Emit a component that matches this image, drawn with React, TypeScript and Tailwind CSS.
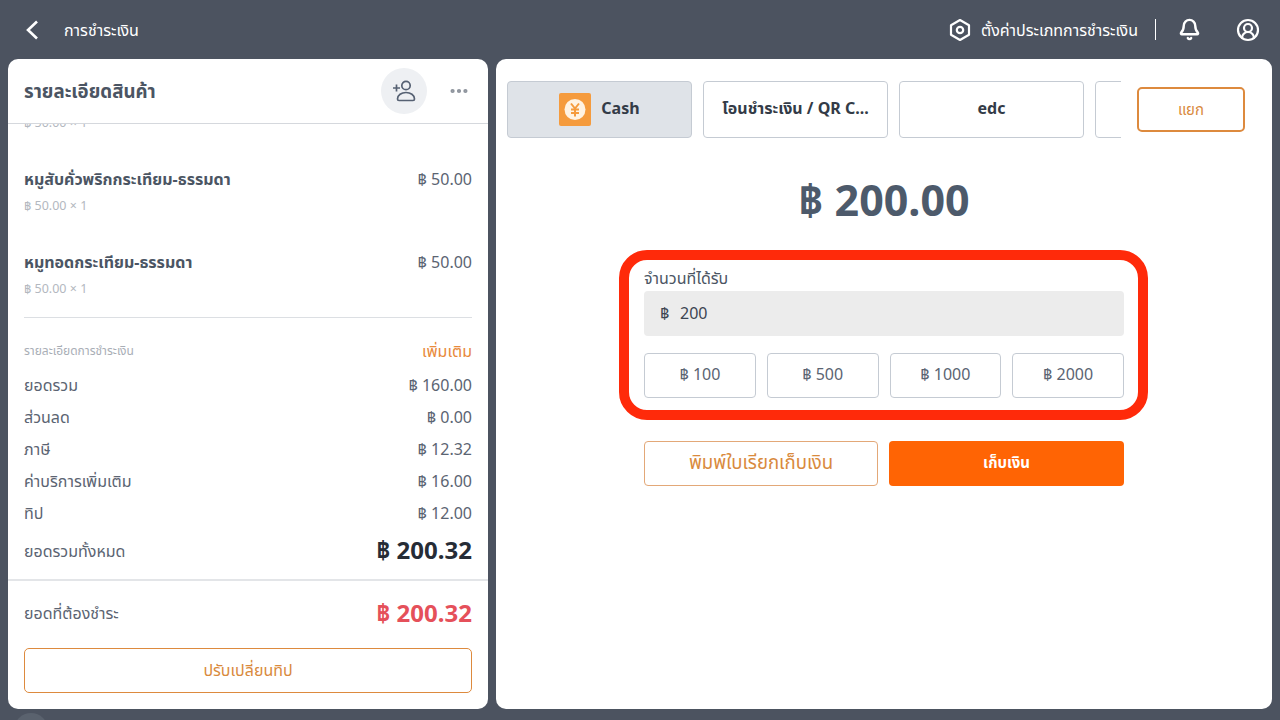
import React from "react";
import { Bell, CircleUserRound, Ellipsis } from "lucide-react";

const font = { fontFamily: '"Noto Sans", "Noto Sans Thai", "Open Sans", "DejaVu Sans", sans-serif' };

function Item({ name, price }: { name: string; price: string }) {
  return (
    <div className="h-[83px] shrink-0 px-4">
      <div className="flex h-[26px] items-center justify-between">
        <span className="text-[16px] font-bold text-[#4b5563]">{name}</span>
        <span className="text-[16px] text-[#5b6472]">{price}</span>
      </div>
      <div className="mt-[5px] h-[18px] text-[12.5px] leading-[18px] text-[#b3b8c0]">฿ 50.00 × 1</div>
    </div>
  );
}

function Row({ label, value }: { label: string; value: string }) {
  return (
    <div className="flex h-[32px] items-center justify-between text-[16px] text-[#5b6472]">
      <span>{label}</span>
      <span>{value}</span>
    </div>
  );
}

function Tab({ label, active, icon }: { label: string; active?: boolean; icon?: boolean }) {
  return (
    <div
      className={`flex h-[57px] w-[185px] shrink-0 items-center justify-center gap-[10px] rounded-[4px] border border-[#c5cbd3] pb-[3px] text-[16px] font-bold text-[#333b47] ${
        active ? "bg-[#dfe3e8]" : "bg-white"
      }`}
    >
      {icon && (
        <svg width="32" height="33" viewBox="0 0 32 33" className="mt-[3px]">
          <rect width="32" height="33" rx="2" fill="#f59b3d" />
          <circle cx="16" cy="16.5" r="10.5" fill="#fff3e3" />
          <path d="M12 10.5l4 5 4-5M16 15.5v8M12 16.5h8M12 20h8" stroke="#f59b3d" strokeWidth="2" fill="none" />
        </svg>
      )}
      <span>{label}</span>
    </div>
  );
}

function Quick({ label }: { label: string }) {
  return (
    <div className="flex h-[45px] items-center justify-center rounded-[4px] border border-[#c5cbd3] pb-[3px] text-[16px] text-[#5b6472]">
      {label}
    </div>
  );
}

export default function App() {
  return (
    <div className="relative flex h-[720px] w-[1280px] flex-col overflow-hidden bg-[#4c5360]" style={font}>
      <header className="flex h-[59px] shrink-0 items-center justify-between pl-[25px] pr-[20px] text-white">
        <div className="flex items-center">
          <svg width="14" height="20" viewBox="0 0 14 20" fill="none" stroke="white" strokeWidth="2.6">
            <path d="M12 1.5L3 10l9 8.5" />
          </svg>
          <span className="ml-[25px] text-[16px]">การชำระเงิน</span>
        </div>
        <div className="flex items-center">
          <svg width="24" height="24" viewBox="0 0 24 24" fill="none" stroke="white" strokeWidth="2.2">
            <path d="M12 2l9 5.2v9.6L12 22l-9-5.2V7.2z" strokeLinejoin="round" />
            <circle cx="12" cy="12" r="3.2" />
          </svg>
          <span className="ml-[9px] text-[16px]">ตั้งค่าประเภทการชำระเงิน</span>
          <span className="ml-[17px] h-[21px] w-px bg-white" />
          <Bell size={23} strokeWidth={2.5} className="ml-[22px]" />
          <CircleUserRound size={24} strokeWidth={2.2} className="ml-[35px]" />
        </div>
      </header>

      <main className="flex gap-[8px] px-[8px]">
        <section className="flex h-[650px] w-[480px] flex-col overflow-hidden rounded-[10px] bg-white">
          <div className="flex h-[65px] shrink-0 items-center justify-between border-b border-[#d5d8dd] pl-4 pr-[18px]">
            <span className="text-[18.7px] font-bold text-[#4b5563]">รายละเอียดสินค้า</span>
            <div className="flex items-center gap-[21px]">
              <div className="flex h-[46px] w-[46px] items-center justify-center rounded-full bg-[#eef0f3]">
                <svg width="24" height="24" viewBox="0 0 24 24" fill="none" stroke="#566173" strokeWidth="1.7">
                  <circle cx="14" cy="6.5" r="4.2" />
                  <path d="M7 21.5q-1.5 0-1.5-1.5C5.5 16 9.5 13.5 14 13.5S22.5 16 22.5 20q0 1.5-1.5 1.5z" />
                  <path d="M1 9h7M4.5 5.5v7" />
                </svg>
              </div>
              <Ellipsis size={22} strokeWidth={2.6} className="text-[#8d939c]" />
            </div>
          </div>
          <div className="flex h-[193px] shrink-0 flex-col overflow-hidden">
            <div className="-mt-[10px] shrink-0 px-4 pb-[34px] text-[12.5px] leading-[18px] text-[#b3b8c0]">
              ฿ 50.00 × 1
            </div>
            <Item name="หมูสับคั่วพริกกระเทียม-ธรรมดา" price="฿ 50.00" />
            <Item name="หมูทอดกระเทียม-ธรรมดา" price="฿ 50.00" />
          </div>
          <div className="mx-4 border-t border-[#dcdfe3] pt-[20px]">
            <div className="flex h-[26px] items-center justify-between">
              <span className="text-[12px] text-[#a9aeb6]">รายละเอียดการชำระเงิน</span>
              <span className="text-[16px] text-[#e8893a]">เพิ่มเติม</span>
            </div>
            <div className="mt-[5px]">
              <Row label="ยอดรวม" value="฿ 160.00" />
              <Row label="ส่วนลด" value="฿ 0.00" />
              <Row label="ภาษี" value="฿ 12.32" />
              <Row label="ค่าบริการเพิ่มเติม" value="฿ 16.00" />
              <Row label="ทิป" value="฿ 12.00" />
            </div>
            <div className="flex h-[42px] items-center justify-between text-[#5b6472]">
              <span className="pt-[2px] text-[16px]">ยอดรวมทั้งหมด</span>
              <span className="text-[24px] font-bold text-[#262c36]">฿ 200.32</span>
            </div>
          </div>
          <div className="mt-[8px] flex h-[64px] shrink-0 items-center justify-between border-t-2 border-[#e3e5e8] px-4 pt-[2px]">
            <span className="text-[16px] text-[#5b6472]">ยอดที่ต้องชำระ</span>
            <span className="text-[24px] font-bold text-[#e5505a]">฿ 200.32</span>
          </div>
          <div className="mx-4 mt-[5px] flex h-[45px] shrink-0 items-center justify-center rounded-[5px] border border-[#dd8a3e] pb-[2px] text-[16px] text-[#d98a3d]">
            ปรับเปลี่ยนทิป
          </div>
        </section>

        <section className="flex h-[650px] w-[776px] flex-col items-center overflow-hidden rounded-[10px] bg-white">
          <div className="flex w-full shrink-0 items-start pl-[11px] pr-[27px] pt-[22px]">
            <div className="flex w-[614px] gap-[11px] overflow-hidden">
              <Tab label="Cash" active icon />
              <Tab label="โอนชำระเงิน / QR C..." />
              <Tab label="edc" />
              <Tab label="" />
            </div>
            <div className="ml-[16px] mt-[6px] flex h-[45px] w-[108px] shrink-0 items-center justify-center rounded-[5px] border-2 border-[#dd8a3e] text-[15px] text-[#d98a3d]">
              แยก
            </div>
          </div>

          <div className="mt-[34px] h-[56px] text-[43px] font-bold leading-[56px] text-[#4d5a6b]">฿ 200.00</div>

          <div className="mr-[1px] mt-[22px] h-[170px] w-[529px] shrink-0 rounded-[28px] border-[10px] border-[#ff2a0a] pl-[15px] pr-[14px] pt-[9px]">
            <div className="h-[22px] text-[16px] leading-[18px] text-[#4b5563]">จำนวนที่ได้รับ</div>
            <div className="flex h-[45px] items-center rounded-[4px] bg-[#ececec] pb-[1px] pl-[16px] text-[16px] text-[#3d4552]">
              <span className="w-[20px]">฿</span>
              <span>200</span>
            </div>
            <div className="mt-[17px] grid grid-cols-4 gap-[11px]">
              <Quick label="฿ 100" />
              <Quick label="฿ 500" />
              <Quick label="฿ 1000" />
              <Quick label="฿ 2000" />
            </div>
          </div>

          <div className="mt-[21px] flex w-[480px] gap-[11px]">
            <div className="flex h-[45px] w-[234px] items-center justify-center rounded-[4px] border border-[#e3a878] pb-[3px] text-[18.6px] text-[#d98a3d]">
              พิมพ์ใบเรียกเก็บเงิน
            </div>
            <div className="flex h-[45px] flex-1 items-center justify-center rounded-[4px] bg-[#ff6404] pb-[2px] text-[15px] font-bold text-white">
              เก็บเงิน
            </div>
          </div>
        </section>
      </main>
      <div className="absolute left-[14px] top-[713px] h-[34px] w-[34px] rounded-full bg-[#5a626e]" />
    </div>
  );
}
